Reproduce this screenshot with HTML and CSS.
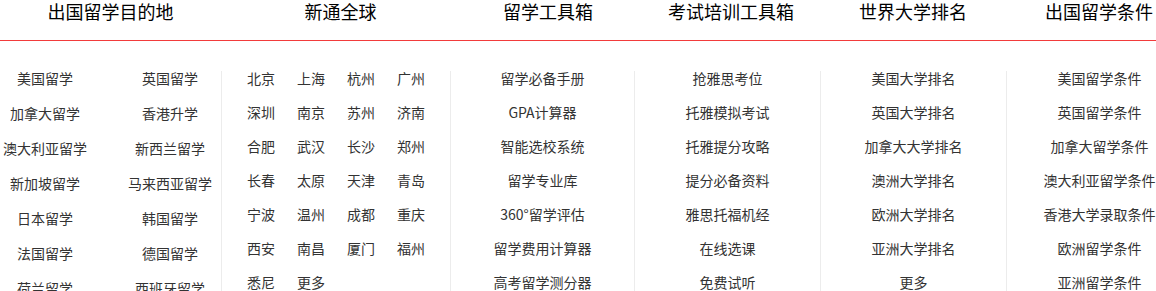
FILE: index.html
```html
<!DOCTYPE html>
<html lang="zh-CN">
<head>
    <meta charset="UTF-8">
    <meta name="viewport" content="width=device-width, initial-scale=1.0">
    <title>留学导航</title>
    <link rel="stylesheet" href="styles.css">
</head>
<body>
    <div class="nav-box">
        <!-- 顶部标题 -->
        <div class="nav-head">
            <div class="head-item col-1">出国留学目的地</div>
            <div class="head-item col-2">新通全球</div>
            <div class="head-item col-3">留学工具箱</div>
            <div class="head-item col-4">考试培训工具箱</div>
            <div class="head-item col-5">世界大学排名</div>
            <div class="head-item col-6">出国留学条件</div>
        </div>

        <!-- 链接列表 -->
        <div class="nav-body">
            <ul class="nav-list list-country col-1">
                <li><a href="#">美国留学</a></li>
                <li><a href="#">英国留学</a></li>
                <li><a href="#">加拿大留学</a></li>
                <li><a href="#">香港升学</a></li>
                <li><a href="#">澳大利亚留学</a></li>
                <li><a href="#">新西兰留学</a></li>
                <li><a href="#">新加坡留学</a></li>
                <li><a href="#">马来西亚留学</a></li>
                <li><a href="#">日本留学</a></li>
                <li><a href="#">韩国留学</a></li>
                <li><a href="#">法国留学</a></li>
                <li><a href="#">德国留学</a></li>
                <li><a href="#">荷兰留学</a></li>
                <li><a href="#">西班牙留学</a></li>
            </ul>
            <ul class="nav-list list-city col-2">
                <li><a href="#">北京</a></li>
                <li><a href="#">上海</a></li>
                <li><a href="#">杭州</a></li>
                <li><a href="#">广州</a></li>
                <li><a href="#">深圳</a></li>
                <li><a href="#">南京</a></li>
                <li><a href="#">苏州</a></li>
                <li><a href="#">济南</a></li>
                <li><a href="#">合肥</a></li>
                <li><a href="#">武汉</a></li>
                <li><a href="#">长沙</a></li>
                <li><a href="#">郑州</a></li>
                <li><a href="#">长春</a></li>
                <li><a href="#">太原</a></li>
                <li><a href="#">天津</a></li>
                <li><a href="#">青岛</a></li>
                <li><a href="#">宁波</a></li>
                <li><a href="#">温州</a></li>
                <li><a href="#">成都</a></li>
                <li><a href="#">重庆</a></li>
                <li><a href="#">西安</a></li>
                <li><a href="#">南昌</a></li>
                <li><a href="#">厦门</a></li>
                <li><a href="#">福州</a></li>
                <li><a href="#">悉尼</a></li>
                <li><a href="#">更多</a></li>
            </ul>
            <ul class="nav-list col-3">
                <li><a href="#">留学必备手册</a></li>
                <li><a href="#">GPA计算器</a></li>
                <li><a href="#">智能选校系统</a></li>
                <li><a href="#">留学专业库</a></li>
                <li><a href="#">360°留学评估</a></li>
                <li><a href="#">留学费用计算器</a></li>
                <li><a href="#">高考留学测分器</a></li>
            </ul>
            <ul class="nav-list col-4">
                <li><a href="#">抢雅思考位</a></li>
                <li><a href="#">托雅模拟考试</a></li>
                <li><a href="#">托雅提分攻略</a></li>
                <li><a href="#">提分必备资料</a></li>
                <li><a href="#">雅思托福机经</a></li>
                <li><a href="#">在线选课</a></li>
                <li><a href="#">免费试听</a></li>
            </ul>
            <ul class="nav-list col-5">
                <li><a href="#">美国大学排名</a></li>
                <li><a href="#">英国大学排名</a></li>
                <li><a href="#">加拿大大学排名</a></li>
                <li><a href="#">澳洲大学排名</a></li>
                <li><a href="#">欧洲大学排名</a></li>
                <li><a href="#">亚洲大学排名</a></li>
                <li><a href="#">更多</a></li>
            </ul>
            <ul class="nav-list col-6">
                <li><a href="#">美国留学条件</a></li>
                <li><a href="#">英国留学条件</a></li>
                <li><a href="#">加拿大留学条件</a></li>
                <li><a href="#">澳大利亚留学条件</a></li>
                <li><a href="#">香港大学录取条件</a></li>
                <li><a href="#">欧洲留学条件</a></li>
                <li><a href="#">亚洲留学条件</a></li>
            </ul>
        </div>
    </div>
</body>
</html>
```

FILE: styles.css
```css
body {
    margin: 0;
    overflow: hidden;
    background-color: #fff;
    font-family: "Noto Sans CJK SC", "Noto Sans", sans-serif;
}

.nav-box {
    width: 1192px;
}

/* 列宽 */
.col-1 { width: 221px; }
.col-2 { width: 229px; }
.col-3 { width: 184px; }
.col-4 { width: 186px; }
.col-5 { width: 186px; }
.col-6 { width: 186px; }

.nav-head {
    display: flex;
    height: 40px;
    border-bottom: 1px solid #f23b3b;
}

.head-item {
    box-sizing: border-box;
    text-align: center;
    font-size: 18px;
    line-height: 22px;
    color: #000;
}

.head-item.col-2 { padding-left: 10px; }
.head-item.col-3 { padding-left: 12px; }
.head-item.col-4 { padding-left: 8px; }

.nav-body {
    display: flex;
    margin-top: 30px;
}

.nav-list {
    box-sizing: border-box;
    margin: 0;
    padding: 0;
    list-style: none;
    border-left: 1px solid #ececec;
    height: 220px;
}

.nav-list.col-1 {
    border-left: none;
}

.nav-list li {
    height: 34px;
    line-height: 14px;
    text-align: center;
    font-size: 14px;
    white-space: nowrap;
}

.nav-list a {
    color: #333;
    text-decoration: none;
}

.nav-list a:hover {
    color: #f23b3b;
}

/* 国家：两列 */
.list-country {
    display: grid;
    grid-template-columns: 90px 90px;
    column-gap: 35px;
    align-content: start;
}

.list-country li {
    height: 35px;
}

/* 城市：四列 */
.list-city {
    display: grid;
    grid-template-columns: repeat(4, 50px);
    align-content: start;
    padding-left: 25px;
}

.list-city li {
    text-align: left;
}
```
